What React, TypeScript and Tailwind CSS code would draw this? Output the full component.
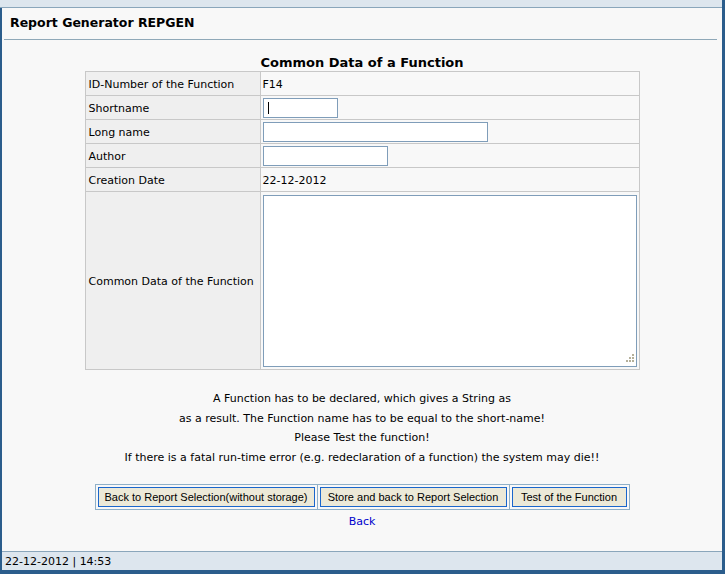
import React from "react";

const F = { fontFamily: '"DejaVu Sans", Verdana, sans-serif' };
const A = { fontFamily: '"Liberation Sans", Arial, sans-serif' };

function Row({ label, children, tall, text }: { label: string; children?: React.ReactNode; tall?: boolean; text?: boolean }) {
  return (
    <tr className={tall ? "h-[178px]" : "h-[24px]"}>
      <td className="border border-[#c8c8c8] bg-[#efefef] pl-[3px] pr-[2px] pt-[4px] pb-0 w-[176px] align-middle whitespace-nowrap">{label}</td>
      <td className={"border border-[#c8c8c8] bg-[#f8f8f8] px-[2px] align-middle " + (text ? "pt-[4px] pb-0" : "py-0")}>{children}</td>
    </tr>
  );
}

export default function App() {
  return (
    <div className="w-[725px] h-[574px] flex flex-col bg-[#2b5d8c] text-black text-[11px]" style={F}>
      <div className="h-[8px] mr-[3px] bg-[#dde6ee] border-b border-[#8aa6bb]" />
      <div className="flex-1 flex flex-col ml-[2px] mr-[3px] bg-[#f8f8f8]">
        <div className="h-[31px] flex items-center pl-[8px] text-[12.5px] font-bold leading-none">Report Generator REPGEN</div>
        <div className="ml-[2px] mr-[5px] h-px bg-[#8fa8b8]" />
        <div className="flex-1 flex flex-col items-center">
          <div className="mt-[14px] h-[17px] leading-[17px] text-[13px] font-bold">Common Data of a Function</div>
          <table className="border-collapse w-[555px] border border-[#c8c8c8]">
            <tbody>
              <Row label="ID-Number of the Function" text>F14</Row>
              <Row label="Shortname">
                <div className="relative w-[75px]">
                  <input className="block w-[75px] h-[20px] border border-[#7f9db9] bg-white outline-none" />
                  <span className="absolute left-[5px] top-[4px] w-px h-[12px] bg-black" />
                </div>
              </Row>
              <Row label="Long name">
                <input className="block w-[225px] h-[20px] border border-[#7f9db9] bg-white outline-none" />
              </Row>
              <Row label="Author">
                <input className="block w-[125px] h-[20px] border border-[#7f9db9] bg-white outline-none" />
              </Row>
              <Row label="Creation Date" text>22-12-2012</Row>
              <Row label="Common Data of the Function" tall>
                <div className="relative w-[374px] h-[172px]">
                  <textarea className="block w-[374px] h-[172px] border border-[#7f9db9] bg-white outline-none resize-none" />
                  <svg className="absolute right-[3px] bottom-[3px]" width="10" height="10" viewBox="0 0 10 10">
                    <rect x="8" y="0" width="2" height="2" fill="#b5b09a" />
                    <rect x="5" y="3" width="2" height="2" fill="#b5b09a" />
                    <rect x="8" y="3" width="2" height="2" fill="#b5b09a" />
                    <rect x="2" y="6" width="2" height="2" fill="#b5b09a" />
                    <rect x="5" y="6" width="2" height="2" fill="#b5b09a" />
                    <rect x="8" y="6" width="2" height="2" fill="#b5b09a" />
                  </svg>
                </div>
              </Row>
            </tbody>
          </table>
          <div className="mt-[19px] text-center leading-[19.5px]">
            <div>A Function has to be declared, which gives a String as</div>
            <div>as a result. The Function name has to be equal to the short-name!</div>
            <div>Please Test the function!</div>
            <div>If there is a fatal run-time error (e.g. redeclaration of a function) the system may die!!</div>
          </div>
          <div className="mt-[17px] flex border border-[#8fb0c8]" style={A}>
            <div className="p-[2px]">
              <button className="block w-[217px] h-[20px] pt-px border border-[#1a66cc] bg-[#ece9d8] text-[11px] leading-none whitespace-nowrap">Back to Report Selection(without storage)</button>
            </div>
            <div className="p-[2px] border-l border-[#8fb0c8]">
              <button className="block w-[187px] h-[20px] pt-px border border-[#1a66cc] bg-[#ece9d8] text-[11px] leading-none whitespace-nowrap">Store and back to Report Selection</button>
            </div>
            <div className="p-[2px] border-l border-[#8fb0c8]">
              <button className="block w-[115px] h-[20px] pt-px border border-[#1a66cc] bg-[#ece9d8] text-[11px] leading-none whitespace-nowrap">Test of the Function</button>
            </div>
          </div>
          <a className="mt-[4px] text-[#0000cc] leading-[16px]">Back</a>
        </div>
        <div className="h-[19px] border-t border-[#8aa6bb] bg-[#dde6ee] flex items-center pl-[3px] leading-none">22-12-2012 | 14:53</div>
      </div>
      <div className="h-[4px]" />
    </div>
  );
}
